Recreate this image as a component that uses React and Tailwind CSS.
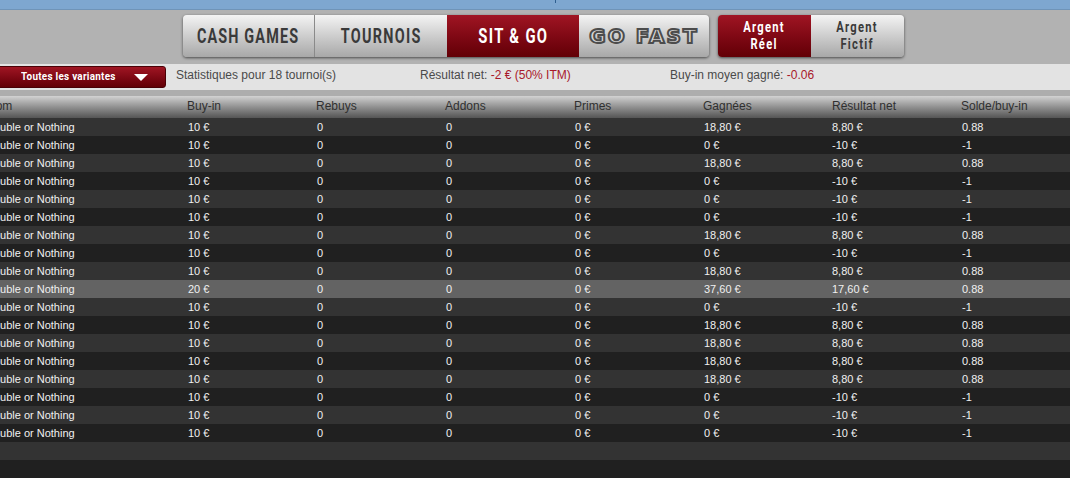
const rows = [
  ['10 €','18,80 €','8,80 €','0.88'],['10 €','0 €','-10 €','-1'],['10 €','18,80 €','8,80 €','0.88'],['10 €','0 €','-10 €','-1'],['10 €','0 €','-10 €','-1'],['10 €','0 €','-10 €','-1'],['10 €','18,80 €','8,80 €','0.88'],['10 €','0 €','-10 €','-1'],['10 €','18,80 €','8,80 €','0.88'],['20 €','37,60 €','17,60 €','0.88'],['10 €','0 €','-10 €','-1'],['10 €','18,80 €','8,80 €','0.88'],['10 €','18,80 €','8,80 €','0.88'],['10 €','18,80 €','8,80 €','0.88'],['10 €','18,80 €','8,80 €','0.88'],['10 €','0 €','-10 €','-1'],['10 €','0 €','-10 €','-1'],['10 €','0 €','-10 €','-1'],
];
const grid = 'grid grid-cols-[188px_129px_129px_129px_129px_129px_129px_129px]';
const cond = { fontFamily: 'Roboto,sans-serif' };
const light = 'bg-gradient-to-b from-[#f4f4f4] to-[#a8a8a8] text-[#3a3a3a]';
const red = 'bg-gradient-to-b from-[#a01523] to-[#620006] text-white';

function Tab({ active, children, className = '' }) {
  return <div style={cond} className={`flex h-full items-center justify-center font-bold ${active ? red : light} ${className}`}>{children}</div>;
}

export default function App() {
  return (
    <div className="relative h-[478px] w-[1070px] overflow-hidden bg-[#202020] font-['Liberation_Sans',Arial,sans-serif]">
      <div className="relative h-[10px] border-b border-[#6f94b8] bg-[#7ea7d0]">
        <div className="absolute left-[555px] top-0 h-[3px] w-px bg-[#2f5f90]" />
      </div>
      <div className="flex h-[54px] items-start bg-[#b2b2b2] pl-[183px] pt-[5px]">
        <div className="grid h-[42px] w-[526px] grid-cols-[132px_132px_132px_130px] overflow-hidden rounded-[4px] shadow-[0_1px_3px_rgba(0,0,0,0.6)]">
          <Tab className="border-r border-[#8a8a8a]"><span className="inline-block scale-x-[0.72] whitespace-nowrap text-[20px] tracking-[1.6px]">CASH GAMES</span></Tab>
          <Tab><span className="inline-block scale-x-[0.72] whitespace-nowrap text-[20px] tracking-[1.8px]">TOURNOIS</span></Tab>
          <Tab active><span className="inline-block scale-x-[0.74] whitespace-nowrap text-[20px] tracking-[1.8px]">SIT &amp; GO</span></Tab>
          <div className={`flex items-center justify-center ${light}`}>
            <span className="inline-block whitespace-nowrap font-['DejaVu_Sans',sans-serif] text-[20px] font-bold tracking-[2px] text-[#d8d8d8] [-webkit-text-stroke:2px_#4c4c4c]">GO FAST</span>
          </div>
        </div>
        <div className="ml-[9px] grid h-[42px] w-[186px] grid-cols-2 overflow-hidden rounded-[4px] shadow-[0_1px_3px_rgba(0,0,0,0.6)]">
          <Tab active><span className="inline-block scale-x-[0.8] text-center text-[14px] leading-[17px] tracking-[1.6px]">Argent<br />Réel</span></Tab>
          <Tab><span className="inline-block scale-x-[0.8] text-center text-[14px] leading-[17px] tracking-[1.6px]">Argent<br />Fictif</span></Tab>
        </div>
      </div>
      <div className="flex h-[26px] items-center bg-[#e3e3e3] text-[12px] text-[#4a4a4a]">
        <div style={cond} className="ml-[-8px] flex h-[22px] w-[174px] items-center rounded-[3px] border border-[#4a0006] bg-gradient-to-b from-[#a01523] to-[#620006] pl-[28px] text-[11px] font-bold tracking-[0.3px] text-white">
          <span className="w-[113px] origin-left scale-x-[0.9] whitespace-nowrap">Toutes les variantes</span>
          <svg width="14" height="7" viewBox="0 0 14 7"><path d="M0 0h14L7 7z" fill="#fff" /></svg>
        </div>
        <span className="mb-[4px] ml-[10px] w-[244px]">Statistiques pour 18 tournoi(s)</span>
        <span className="mb-[4px] w-[250px]">Résultat net: <span className="text-[#a8182a]">-2 € (50% ITM)</span></span>
        <span className="mb-[4px]">Buy-in moyen gagné: <span className="text-[#a8182a]">-0.06</span></span>
      </div>
      <div className="h-[6px] bg-[#adadad]" />
      <div className={`${grid} h-[22px] items-center bg-gradient-to-b from-[#d2d2d2] to-[#555555] pb-[2px] text-[12px] text-[#303030]`}>
        <div className="ml-[-13px]">Nom</div>
        <div className="ml-[-1px]">Buy-in</div><div className="ml-[-1px]">Rebuys</div><div className="ml-[-1px]">Addons</div><div className="ml-[-1px]">Primes</div><div className="ml-[-1px]">Gagnées</div><div className="ml-[-1px]">Résultat net</div><div className="ml-[-1px]">Solde/buy-in</div>
      </div>
      {rows.map((r, i) => (
        <div key={i} className={`${grid} h-[18px] items-center pt-px text-[11px] text-[#f0f0f0] ${i === 9 ? 'bg-[#636363]' : i % 2 === 0 ? 'bg-[#333333]' : 'bg-[#202020]'}`}>
          <div className="ml-[-14px] whitespace-nowrap">Double or Nothing</div>
          <div>{r[0]}</div><div>0</div><div>0</div><div>0 €</div><div>{r[1]}</div><div className="ml-[-1px]">{r[2]}</div><div>{r[3]}</div>
        </div>
      ))}
      <div className="h-[18px] bg-[#333333]" />
    </div>
  );
}
